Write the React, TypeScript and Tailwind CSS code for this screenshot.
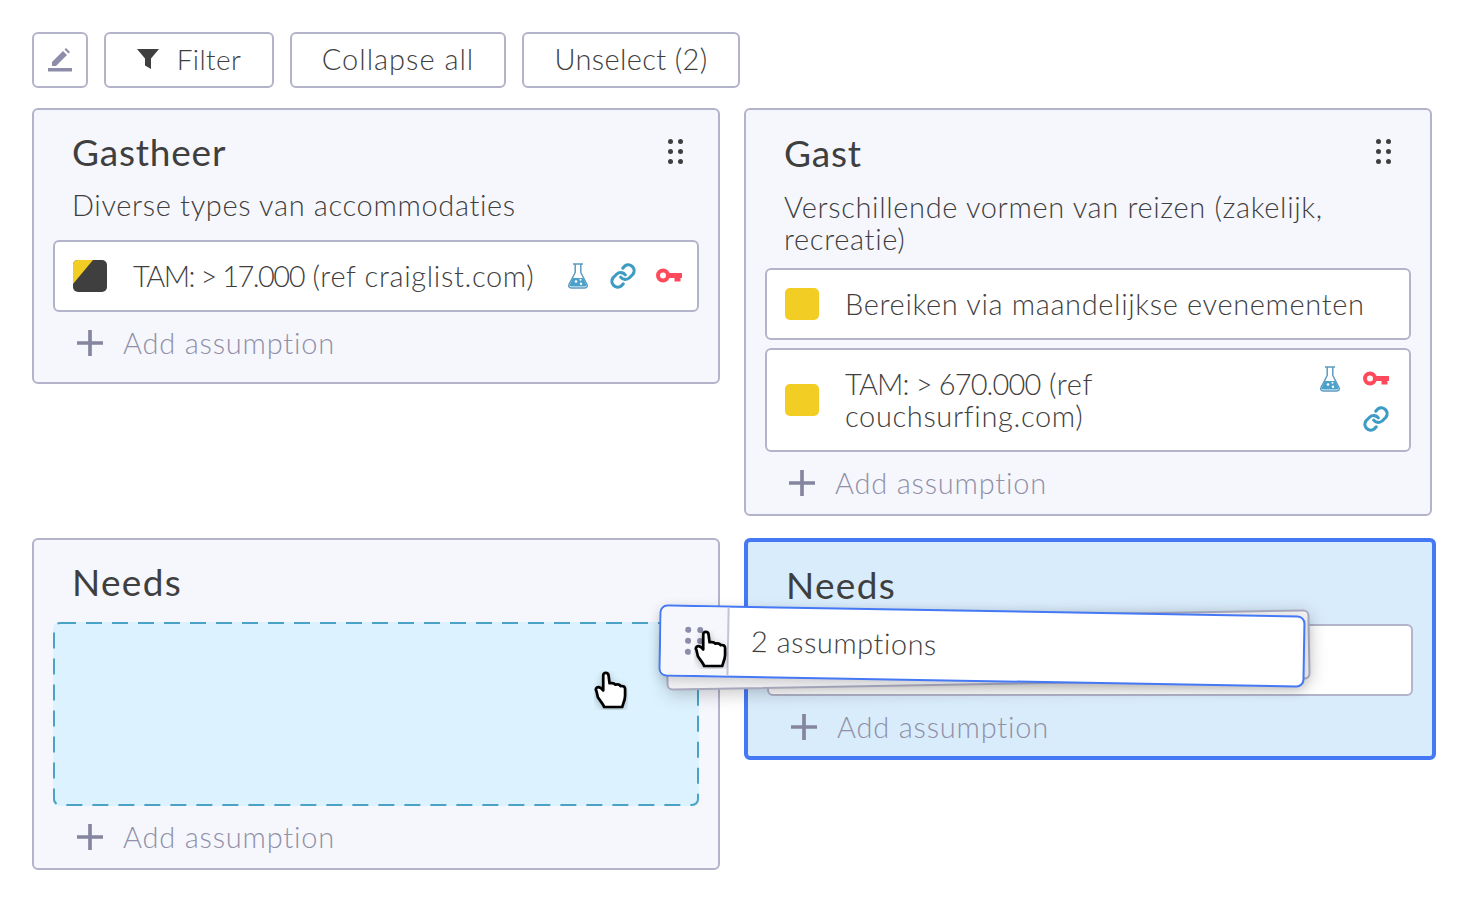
import React from "react";

const FONT = "font-['Lato','Open_Sans',sans-serif]";
const BODY = "text-[29px] font-light tracking-[0.65px]";
const TITLE = "text-[37px] leading-[40px] text-[#3f3f3f] font-normal tracking-[0.8px]";

function Flask({ className }: { className?: string }) {
  return (
    <svg viewBox="0 0 24 28" className={className} fill="none">
      <path d="M7 2h10M9.200 2.500v8L3 22.500c-.9 1.900.2 3.500 2.200 3.500h13.600c2 0 3.100-1.600 2.200-3.500l-6.200-12v-8" stroke="#5b9bc2" strokeWidth="1.500" strokeLinejoin="round" />
      <path d="M6.800 16h10.400l3 6.500c.5 1.200-.1 2-1.300 2H5.100c-1.200 0-1.800-.8-1.300-2z" fill="#4aa1c9" />
      <circle cx="10" cy="19.500" r="1.300" fill="#fff" />
      <circle cx="14.500" cy="17.800" r="1" fill="#fff" />
      <circle cx="15" cy="21.800" r="1.200" fill="#fff" />
    </svg>
  );
}

function Chain({ className }: { className?: string }) {
  return (
    <svg viewBox="0 0 24 24" className={className} fill="none" stroke="#3d9cc4" strokeWidth="2.700" strokeLinecap="round" strokeLinejoin="round">
      <path d="M10 13a5 5 0 0 0 7.500.5l3-3a5 5 0 0 0-7-7l-1.700 1.700" />
      <path d="M14 11a5 5 0 0 0-7.500-.5l-3 3a5 5 0 0 0 7 7l1.700-1.700" />
    </svg>
  );
}

function Key() {
  return (
    <svg viewBox="0 0 26 16" className="w-[26px] h-[16px]">
      <circle cx="7" cy="7.500" r="5" fill="none" stroke="#ff4a5c" strokeWidth="4" />
      <rect x="11" y="5" width="15" height="5" fill="#ff4a5c" />
      <rect x="18.500" y="9" width="6" height="4.500" fill="#ff4a5c" />
    </svg>
  );
}

function Funnel() {
  return (
    <svg viewBox="0 0 22 22" className="w-[22px] h-[22px]">
      <path d="M0 1h22l-8 9.500V21l-6-3.500v-7z" fill="#3f3f3f" />
    </svg>
  );
}

function Pencil() {
  return (
    <svg viewBox="0 0 24 24" className="w-[24px] h-[24px]" fill="#8d8dab">
      <rect x="0" y="20" width="24" height="3.500" />
      <path d="M4 18v-4L15 3l4 4L8 18z" />
      <path d="M16.500 1.500 18 0l4 4-1.500 1.500z" />
    </svg>
  );
}

function Dots({ color, className, size = "w-[5px] h-[5px]", gaps = "gap-x-[5px] gap-y-[5px]" }: { color: string; className?: string; size?: string; gaps?: string }) {
  const dot = <span className={`${size} rounded-full`} style={{ background: color }} />;
  return (
    <div className={`grid grid-cols-2 w-fit h-fit ${gaps} ${className ?? ""}`}>
      {dot}{dot}{dot}{dot}{dot}{dot}
    </div>
  );
}

function Hand({ className }: { className?: string }) {
  return (
    <svg viewBox="-1.500 -1.500 35 40" className={className}>
      <path
        d="M8 3c0-3.500 5-3.500 5.500 0l1 8c3-.5 5 0 6 1.500 2.500-.5 4.500 0 5.500 1.500 2.500-.5 4.500.5 4.500 3v7c0 3-1 6-2 8.500l-1 3H9c-1-3-4-6-6.500-10L1 19c-1.500-2 0-4 2-4 2 0 3.500 1.500 5 3.500z"
        fill="#fff"
        stroke="#000"
        strokeWidth="2.800"
        strokeLinejoin="round"
        style={{ filter: "drop-shadow(0 2px 4px rgba(0,0,0,0.25))" }}
      />
    </svg>
  );
}

function AddRow() {
  return (
    <div className="flex items-center h-10 pl-[24px] text-[#9090a8]">
      <svg viewBox="0 0 24 24" className="w-[26px] h-[26px]" fill="none" stroke="#85859f" strokeWidth="3.400"><path d="M12 0v24M0 12h24" /></svg>
      <span className="ml-[20px] text-[29px] font-light tracking-[0.8px]">Add assumption</span>
    </div>
  );
}

function Item({ children, color, corner, right, h = "h-[72px]" }: { children: React.ReactNode; color: string; corner?: boolean; right?: React.ReactNode; h?: string }) {
  return (
    <div className={`flex items-center ${h} border-2 border-[#b3b3ca] rounded-[6px] bg-white pl-[18px] pr-[15px]`}>
      <div className="relative w-[34px] h-[32px] rounded-[5px] shrink-0 overflow-hidden" style={{ background: color }}>
        {corner && (
          <svg viewBox="0 0 34 32" className="absolute inset-0 w-full h-full"><path d="M0 0h20L0 24z" fill="#f2ce24" /></svg>
        )}
      </div>
      <div className={`ml-[26px] flex-1 leading-[32px] text-[#3f3f3f] ${BODY}`}>{children}</div>
      {right}
    </div>
  );
}

function Btn({ children, w, text = "text-[29px] tracking-[0.35px]" }: { children: React.ReactNode; w: string; text?: string }) {
  return (
    <button className={`${w} h-14 flex items-center justify-center border-2 border-[#b3b3ca] rounded-[6px] bg-white pb-[2px] text-[#3f3f3f] font-light ${text}`}>
      {children}
    </button>
  );
}

export default function App() {
  return (
    <div className={`relative w-[1464px] h-[904px] bg-white overflow-hidden p-8 ${FONT}`}>
      <div className="flex gap-4">
        <Btn w="w-14"><span className="pt-[2px]"><Pencil /></span></Btn>
        <Btn w="w-[170px]" text="text-[28px] tracking-[0.4px]"><Funnel /><span className="ml-[18px]">Filter</span></Btn>
        <Btn w="w-[216px]" text="text-[29px] tracking-[1px]">Collapse all</Btn>
        <Btn w="w-[218px]">Unselect (2)</Btn>
      </div>

      <div className="mt-5 grid grid-cols-[688px_688px] gap-x-6 gap-y-[22px] items-start">
        {/* Gastheer */}
        <section className="h-[276px] border-2 border-[#b3b3ca] rounded-[6px] bg-[#f6f7fd] px-[19px] pt-[22px]">
          <div className="flex justify-between items-start pl-[19px] pr-[16px]">
            <h2 className={TITLE}>Gastheer</h2>
            <Dots color="#3f3f3f" className="mt-[7px]" />
          </div>
          <p className={`mt-[17px] pl-[19px] leading-[32px] text-[#3f3f3f] ${BODY}`}>Diverse types van accommodaties</p>
          <div className="mt-[19px]">
            <Item
              color="#3f3f3f"
              corner
              right={
                <div className="flex items-center gap-[19px]">
                  <Flask className="w-[24px] h-[28px]" />
                  <Chain className="w-[28px] h-[28px]" />
                  <Key />
                </div>
              }
            >
              <span className="tracking-[-1.500px]">TAM: &gt; 17.000</span> (ref craiglist.com)
            </Item>
          </div>
          <div className="mt-[11px]"><AddRow /></div>
        </section>

        {/* Gast */}
        <section className="h-[408px] border-2 border-[#b3b3ca] rounded-[6px] bg-[#f6f7fd] px-[19px] pt-[23px]">
          <div className="flex justify-between items-start pl-[19px] pr-[20px]">
            <h2 className={TITLE}>Gast</h2>
            <Dots color="#3f3f3f" className="mt-[6px]" />
          </div>
          <p className={`mt-[18px] pl-[19px] leading-[32px] text-[#3f3f3f] ${BODY}`}>Verschillende vormen van reizen (zakelijk,<br />recreatie)</p>
          <div className="mt-[13px] flex flex-col gap-2">
            <Item color="#f2ce24">Bereiken via maandelijkse evenementen</Item>
            <Item
              color="#f2ce24"
              h="h-[104px]"
              right={
                <div className="grid grid-cols-[36px_36px] gap-x-[10px] gap-y-[12px] justify-items-center items-center -mt-[3px]">
                  <Flask className="w-[24px] h-[28px]" />
                  <Key />
                  <span />
                  <Chain className="w-[28px] h-[28px]" />
                </div>
              }
            >
              <span className="tracking-[-0.850px]">TAM: &gt; 670.000</span> (ref<br />couchsurfing.com)
            </Item>
          </div>
          <div className="mt-[11px]"><AddRow /></div>
        </section>

        {/* Needs left */}
        <section className="h-[332px] border-2 border-[#b3b3ca] rounded-[6px] bg-[#f6f7fd] px-[19px] pt-[22px]">
          <h2 className={`pl-[19px] tracking-[1.300px] ${TITLE}`}>Needs</h2>
          <div className="relative mt-[20px] h-[184px] rounded-[6px] bg-[#dcf3ff]">
            <svg className="absolute inset-0 w-full h-full" fill="none">
              <rect x="1" y="1" width="644" height="182" rx="6" stroke="#4aa3c4" strokeWidth="2" strokeDasharray="16 10" />
            </svg>
          </div>
          <div className="mt-[11px]"><AddRow /></div>
        </section>

        {/* Needs right */}
        <section className="w-[692px] h-[222px] border-4 border-[#4478f5] rounded-[6px] bg-[#d9ecfb] px-[19px] pt-[22px]">
          <h2 className={`pl-[19px] pt-[1px] tracking-[1.300px] ${TITLE}`}>Needs</h2>
          <div className="mt-[19px] h-[72px] border-2 border-[#b3b3ca] rounded-[6px] bg-white" />
          <div className="mt-[11px]"><AddRow /></div>
        </section>
      </div>

      {/* cursor in the drop zone */}
      <Hand className="absolute left-[594px] top-[671px] w-[34px] h-[39px]" />

      {/* dragged stack */}
      <div className="absolute left-[666px] top-[615px] w-[644px] h-[70px] -rotate-1 border-2 border-[#a9a9bf] rounded-[6px] bg-[#f3f3f6] shadow-[0_4px_18px_rgba(0,0,0,0.22)]" />
      <div className="absolute left-[659px] top-[610px] w-[646px] h-[72px] rotate-1 flex border-2 border-[#4478f5] rounded-[8px] bg-white shadow-[0_3px_12px_rgba(0,0,0,0.18)] overflow-hidden">
        <div className="w-[68px] bg-[#f6f7fd] border-r-2 border-[#c4c4d6] flex items-center pl-[24px]">
          <Dots color="#8d8dab" size="w-[6px] h-[6px]" gaps="gap-x-[6px] gap-y-[5px]" />
        </div>
        <div className="flex items-center pl-[22px] pb-[2px] text-[#3f3f3f] text-[29px] font-light tracking-[0.5px]">2 assumptions</div>
      </div>
      <Hand className="absolute left-[694px] top-[630px] w-[34px] h-[39px]" />
    </div>
  );
}
